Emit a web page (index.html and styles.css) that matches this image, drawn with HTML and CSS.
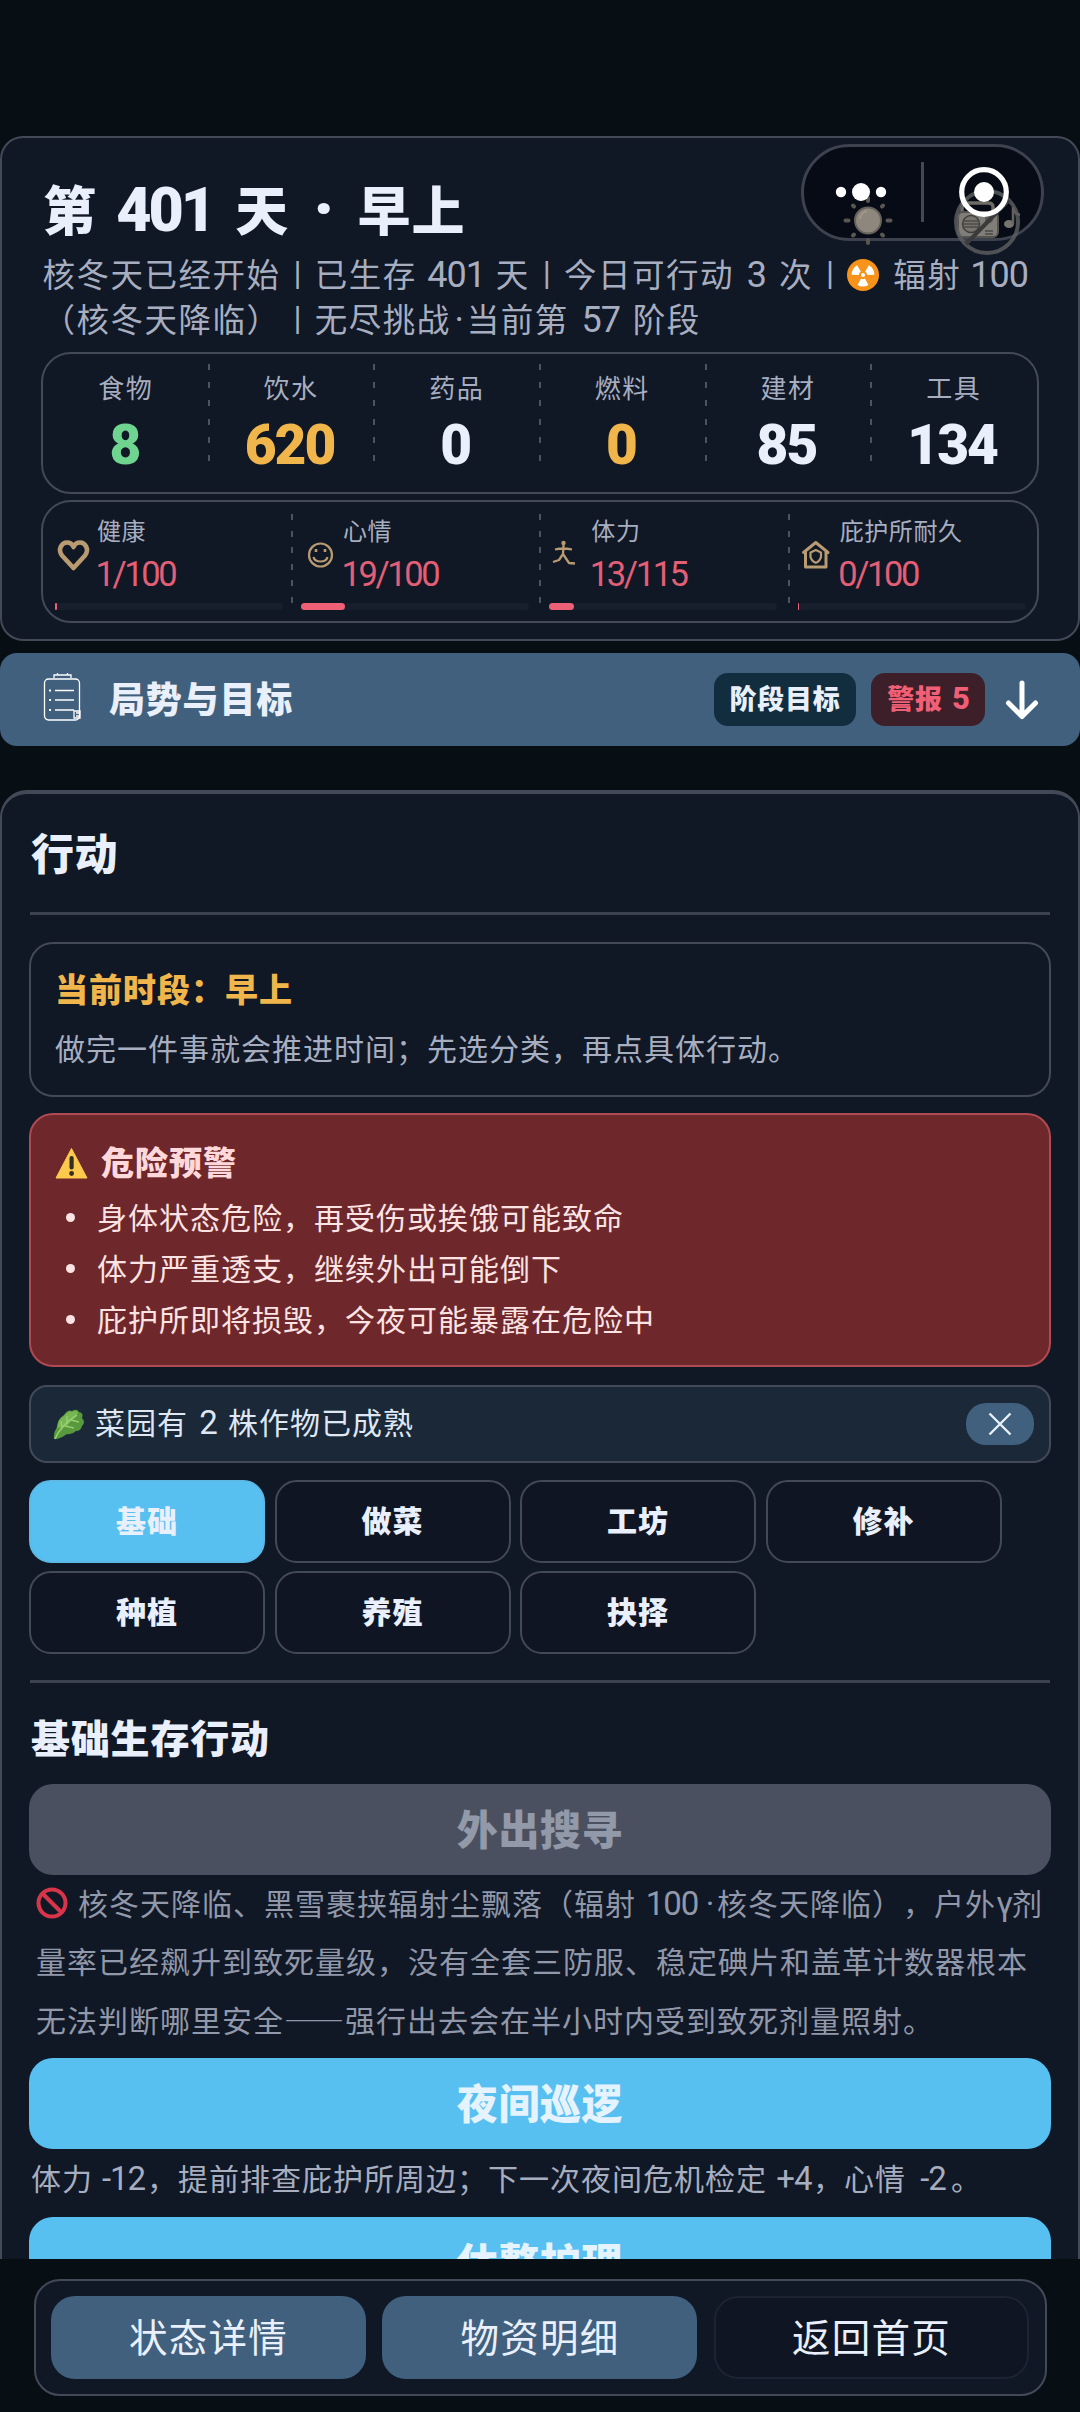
FILE: index.html
```html
<!DOCTYPE html>
<html lang="zh-CN">
<head>
<meta charset="utf-8">
<title>行动</title>
<link rel="stylesheet" href="styles.css">
</head>
<body>
<div class="screen">
  <header class="hero">
    <h1 class="day">第<span class="n day-num">401</span>天<span class="n day-dot">·</span>早上</h1>
    <p class="summary">核冬天已经开始<span class="bar">|</span>已生存<span class="n n3">401</span>天<span class="bar">|</span>今日可行动<span class="n n1">3</span>次<span class="bar">|</span><svg class="emo rad" viewBox="0 0 32 32"><circle cx="16" cy="16" r="16" fill="#f7931a"/><g fill="#fff"><circle cx="16" cy="16" r="2"/><path id="blade" d="M14 19.6 L10.6 26 Q16 29 21.4 26 L18 19.6 Q16 20.8 14 19.6Z"/><use href="#blade" transform="rotate(120 16 16)"/><use href="#blade" transform="rotate(240 16 16)"/></g></svg>辐射<span class="n n100">100</span><br>（核冬天降临）<span class="bar">|</span>无尽挑战<span class="n mid">·</span>当前第<span class="n n2">57</span>阶段</p>

    <div class="resources">
      <div class="res"><span class="label">食物</span><b class="good">8</b></div>
      <div class="res"><span class="label">饮水</span><b class="warn">620</b></div>
      <div class="res"><span class="label">药品</span><b>0</b></div>
      <div class="res"><span class="label">燃料</span><b class="warn">0</b></div>
      <div class="res"><span class="label">建材</span><b>85</b></div>
      <div class="res"><span class="label">工具</span><b>134</b></div>
    </div>

    <div class="vitals">
      <div class="vital">
        <svg class="vi" viewBox="0 0 36 36"><path d="M18.500 31 L7 18.500 C2.500 12.500 6.500 5.500 12 5.500 C15.500 5.500 17.500 7.500 18.500 10 C19.500 7.500 21.500 5.500 25 5.500 C30.500 5.500 34.500 12.500 30 18.500 Z" stroke-width="4.600"/></svg>
        <span class="label">健康</span><span class="val">1/100</span>
        <div class="track"><i style="width:2px"></i></div>
      </div>
      <div class="vital">
        <svg class="vi" viewBox="0 0 36 36"><circle cx="19.500" cy="18" r="11.500"/><path d="M12.500 20 Q13.500 24.500 19.500 24.500 Q25.500 24.500 26.500 20"/><path d="M15 12v3M24 12v3" stroke-width="2.600"/></svg>
        <span class="label">心情</span><span class="val">19/100</span>
        <div class="track"><i style="width:44px"></i></div>
      </div>
      <div class="vital">
        <svg class="vi" viewBox="0 0 36 36"><circle cx="14.500" cy="6" r="2.200" fill="#b99b72" stroke="none"/><path d="M6 12.500 Q14 10.500 23 12.500 M14.500 8 L14 17 L10 23 L4 25 M14 17 L20 26 L26 26.500" stroke-width="2.300"/></svg>
        <span class="label">体力</span><span class="val">13/115</span>
        <div class="track"><i style="width:25px"></i></div>
      </div>
      <div class="vital">
        <svg class="vi" viewBox="0 0 36 36"><path d="M7.500 30 V15 L5.500 15.500 L17.800 5.500 L30 15.500 L28 15 V30 Z" stroke-width="3"/><path d="M17.800 13 L23 15.500 V20 Q22 24 17.800 25.800 Q13.500 24 12.500 20 V15.500 Z"/></svg>
        <span class="label">庇护所耐久</span><span class="val">0/100</span>
        <div class="track"><i style="width:1px"></i></div>
      </div>
    </div>

    <svg class="capsule" viewBox="0 0 246 126">
      <rect x="1.500" y="1.500" width="240" height="94" rx="47" fill="#070b15" stroke="#3d424e" stroke-width="3"/>
      <rect x="120" y="18" width="3" height="60" fill="#444955"/>
      <g stroke="#5a5652" stroke-width="4" stroke-linecap="round">
        <path d="M67 57v-3M67 96v3M47.500 76.500h-3M86.500 76.500h3M53 62.500l-1-1M81 62.500l1-1M53 90.500l-1 1M81 90.500l1 1"/>
      </g>
      <circle cx="67" cy="76.500" r="13" fill="#8e877d" stroke="#67625c" stroke-width="2"/>
      <path d="M59 75q1-7 7-8" fill="none" stroke="#a39c91" stroke-width="1.500"/>
      <g>
        <path d="M161 70v-7q0-4 5-4h21q5 0 5 4v7" fill="none" stroke="#6f6c68" stroke-width="3.500"/>
        <rect x="157" y="68" width="40" height="25" rx="5" fill="#817e79" stroke="#55534f" stroke-width="2"/>
        <circle cx="170" cy="80" r="8.500" fill="#77746f" stroke="#403f3d" stroke-width="1.500"/>
        <path d="M163 77h14M162 80h16M163 83h14M184 87h8M184 90h8" stroke="#4b4946" stroke-width="1.300"/>
        <circle cx="188" cy="75" r="4" fill="#5c5a56"/>
        <ellipse cx="208" cy="80" rx="5" ry="4" fill="#77736e"/>
        <path d="M212 80V63q0 6 7 8" fill="none" stroke="#66635f" stroke-width="2.500"/>
      </g>
      <circle cx="186" cy="78" r="31" fill="none" stroke="#5e5e60" stroke-opacity=".82" stroke-width="4"/>
      <path d="M165 100L208 56" stroke="#3c3b3c" stroke-width="4"/>
      <g fill="#fff"><circle cx="40" cy="48" r="5.200"/><circle cx="60" cy="48" r="9"/><circle cx="80" cy="48" r="5.200"/><circle cx="183" cy="48" r="10"/></g>
      <circle cx="183" cy="48" r="22.300" fill="none" stroke="#fff" stroke-width="5.200"/>
    </svg>
  </header>

  <section class="goals">
    <svg class="clip" viewBox="0 0 40 50"><g fill="none" stroke="#fff" stroke-width="1.300"><rect x="1.500" y="7" width="35" height="41" rx="4"/><path d="M11 6V3h17v3M14.500 3V1M24.500 3V1M12 18.500h19M12 28h19M12 38h19"/><path d="M31 39h6v7h-6zM33 41h3M33 44h4"/></g><path d="M6 17.500h2v2h-2zM6 27h2v2h-2zM6 37h2v2h-2z" fill="#fff"/></svg>
    <h2>局势与目标</h2>
    <span class="tag stage">阶段目标</span>
    <span class="tag alert">警报<span class="n tagnum">5</span></span>
    <svg class="arrow" viewBox="0 0 34 40"><path d="M17 3V35M3.500 23L17 36.500L30.500 23" fill="none" stroke="#fff" stroke-width="5" stroke-linecap="round" stroke-linejoin="round"/></svg>
  </section>

  <main class="actions">
    <h2 class="title">行动</h2>
    <hr>
    <section class="box period">
      <h3>当前时段：早上</h3>
      <p>做完一件事就会推进时间；先选分类，再点具体行动。</p>
    </section>
    <section class="box danger">
      <h3><svg class="emo tri" viewBox="0 0 32 32"><path d="M16 1.500L31.500 31H.5Z" fill="#fdc94d" stroke="#fdc94d" stroke-linejoin="round"/><rect x="14" y="9" width="4.200" height="13.500" rx="2" fill="#332e24"/><circle cx="16.100" cy="26.500" r="2.400" fill="#332e24"/></svg>危险预警</h3>
      <ul>
        <li>身体状态危险，再受伤或挨饿可能致命</li>
        <li>体力严重透支，继续外出可能倒下</li>
        <li>庇护所即将损毁，今夜可能暴露在危险中</li>
      </ul>
    </section>
    <section class="box notice">
      <svg class="leaf" viewBox="0 0 32 32"><path d="M1 31Q0 25 4 19Q5 10 11 7Q15 1 19 3Q24 0 26 4Q31 5 29 10Q33 14 29 18Q28 23 23 23Q19 27 14 26Q9 30 4 31Z" fill="#57993c"/><path d="M4 20Q5 11 11 8Q15 2 19 4Q24 1 25 5L13 19Z" fill="#76b752"/><path d="M2 31Q7 18 24 7M9 21L8 13M14 16V8M12 18l9 2M18 12l8 2" fill="none" stroke="#98cc72" stroke-width="1.500"/></svg>
      <span>菜园有<span class="n n1s">2</span>株作物已成熟</span>
      <button class="close"><svg viewBox="0 0 24 24"><path d="M1.500 1.500L22.500 22.500M22.500 1.500L1.500 22.500" stroke="#eaf2fb" stroke-width="2.300"/></svg></button>
    </section>
    <nav class="tabs">
      <button class="on">基础</button><button>做菜</button><button>工坊</button><button>修补</button>
      <button>种植</button><button>养殖</button><button>抉择</button>
    </nav>
    <hr class="second">
    <h3 class="group">基础生存行动</h3>
    <button class="act off">外出搜寻</button>
    <p class="reason"><svg class="emo ban" viewBox="0 0 32 32"><g fill="none" stroke="#d8354a" stroke-width="4"><circle cx="16" cy="16" r="13.500"/><path d="M6.500 6.500l19 19"/></g></svg>核冬天降临、黑雪裹挟辐射尘飘落（辐射<span class="n n100s">100</span><span class="n mids">·</span>核冬天降临），户外<span class="n gam">γ</span>剂<br>量率已经飙升到致死量级，没有全套三防服、稳定碘片和盖革计数器根本<br>无法判断哪里安全——强行出去会在半小时内受到致死剂量照射。</p>
    <button class="act">夜间巡逻</button>
    <p class="effect">体力<span class="n e1">-12</span>，提前排查庇护所周边；下一次夜间危机检定<span class="n e2">+4</span>，心情<span class="n e3">-2</span>。</p>
    <button class="act">休整护理</button>
  </main>

  <footer class="dock">
    <div class="dock-box">
      <button>状态详情</button><button>物资明细</button><button class="home">返回首页</button>
    </div>
  </footer>
</div>
</body>
</html>
```
FILE: styles.css
```css
* { box-sizing: border-box; margin: 0; padding: 0; }
body {
  width: 1080px; height: 2412px; overflow: hidden;
  background: #070f15; color: #e9f0fb;
  font-family: "Noto Sans CJK SC", sans-serif; font-size: 30px;
  text-spacing-trim: space-all;
}
button { border: 0; font: inherit; color: inherit; }
svg { display: block; flex: none; }
h2, h3 { font-weight: 900; }

.screen { display: flex; flex-direction: column; height: 2412px; padding-top: 136px; }
.n { display: inline-block; font-family: Roboto, sans-serif; line-height: 1; text-align: center; letter-spacing: -1px; white-space: nowrap; }
.emo { display: inline-block; }

/* status header */
.hero {
  position: relative; flex: none; height: 505px; padding: 35px 39px 0;
  border: 2px solid #434957; border-radius: 23px; background: #101725;
}
.day { margin-left: 2px; font-size: 53px; font-weight: 900; line-height: 70px; letter-spacing: 1.2px; white-space: nowrap; }
.day-num { width: 138px; padding-right: 3px; font-size: 61px; letter-spacing: -3px; }
.day-dot { width: 68px; font-size: 66px; }
.summary { margin: 7px 0 12px 1.500px; font-size: 32.500px; line-height: 45px; letter-spacing: 1.500px; color: #a7aec0; white-space: nowrap; }
.summary .n { font-size: 36px; }
.bar { display: inline-block; width: 34.200px; text-align: center; font-family: Roboto, sans-serif; font-size: 33px; line-height: 1; letter-spacing: 0; vertical-align: 2px; }
.n3 { width: 79px; }
.n1 { width: 45px; }
.n2 { width: 64px; }
.summary .n100 { width: 76px; }
.mid { width: 16px; }
.rad { width: 32px; height: 32px; vertical-align: -4px; margin-right: 14px; }

.resources, .vitals { display: grid; border: 2px solid #434957; border-radius: 30px; }
.resources { grid-template-columns: repeat(6, 1fr); height: 142px; margin-bottom: 6px; }
.res { display: flex; flex-direction: column; align-items: center; padding-top: 15px; }
.res + .res, .vital + .vital { background: repeating-linear-gradient(#4c5261 0 6px, transparent 6px 18.200px) 0 10px / 2px 97px no-repeat; margin-left: -1px; }
.res .label { font-size: 26px; line-height: 36px; letter-spacing: 1.500px; color: #a7aec0; }
.res b { margin: 10px 3px 0 0; font: 900 55px/60px Roboto, sans-serif; letter-spacing: -2px; }
.good { color: #6fd490; }
.warn { color: #f0b64b; }

.vitals { grid-template-columns: repeat(4, 1fr); height: 123px; }
.vital { display: grid; grid-template: 37px 44px 8px / 42px 1fr; align-content: start; padding: 10px 9px 0 12px; column-gap: 0; }
.vital + .vital { background-size: 2px 89px; background-position: 0 12px; background-image: repeating-linear-gradient(#4c5261 0 6px, transparent 6px 16.600px); padding-left: 10px; }
.vi { grid-row: 1 / 3; width: 36px; height: 36px; margin-top: 25px; fill: none; stroke: #b99b72; stroke-width: 2.200; stroke-linejoin: round; }
.vital .label { font-size: 24px; line-height: 36px; letter-spacing: .6px; color: #a7aec0; white-space: nowrap; }
.val { padding-top: 2.500px; margin-left: -1.500px; font: 400 34.500px/44px Roboto, sans-serif; letter-spacing: -2.400px; color: #e25f76; }
.track { grid-column: 1 / 3; width: 228px; height: 7px; margin-top: 10px; border-radius: 4px; background: #171e2c; }
.track i { display: block; height: 7px; border-radius: 4px; background: #ee6075; }

.capsule { position: absolute; left: 799px; top: 5.500px; width: 246px; height: 126px; }

/* goals strip */
.goals { display: flex; flex: none; align-items: center; height: 93px; margin-top: 12px; padding: 0 41px 0 43px; border-radius: 17px; background: #41607e; }
.clip { width: 40px; height: 50px; margin-top: -5px; }
.goals h2 { margin: -5px auto 0 26px; font-size: 36px; line-height: 50px; letter-spacing: .8px; }
.tag { height: 53px; border-radius: 14px; font-size: 27px; font-weight: 800; line-height: 50px; letter-spacing: .8px; text-align: center; white-space: nowrap; }
.stage { width: 142px; margin-right: 15px; background: #112d3e; }
.alert { width: 114px; margin-right: 20px; background: #3c1f29; color: #f05f76; }
.tagnum { width: 26px; font-size: 31px; text-align: right; }
.arrow { width: 34px; height: 40px; }

/* action panel */
.actions {
  flex: 1; min-height: 0; overflow: hidden; margin-top: 44px; padding: 0 27px;
  border: 2px solid #434957; border-top-width: 4px; border-bottom: 0; border-radius: 27px 27px 0 0; background: #101725;
}
.title { margin: 26px 0 0 2px; font-size: 43px; line-height: 62px; letter-spacing: .5px; }
hr { height: 3px; margin: 30px 1px 0; border: 0; background: #3c4250; }
.box { border: 2px solid #434957; border-radius: 24px; }
.period { height: 155px; margin-top: 27px; padding: 19px 24px; }
.box h3 { font-size: 33px; line-height: 50px; letter-spacing: 1px; }
.period h3 { color: #f0b64b; }
.period p { margin-top: 10px; line-height: 48px; letter-spacing: 1px; color: #a7aec0; white-space: nowrap; }
.danger { height: 254px; margin-top: 16px; padding: 21px 25px; background: #6e272a; border-color: #b04a52; }
.danger h3 { color: #fed8da; }
.tri { width: 33px; height: 32px; vertical-align: -4px; margin: 0 13px 0 -1px; }
.danger ul { list-style: none; margin-top: 4.500px; color: #fbe3e4; }
.danger li { display: flex; align-items: center; line-height: 51px; letter-spacing: 1px; white-space: nowrap; }
.danger li::before { content: ""; width: 9px; height: 9px; margin: 3px 22px 0 10px; border-radius: 50%; background: #fbe3e4; }
.notice { display: flex; align-items: center; height: 78px; margin-top: 18px; padding: 0 15px 0 22px; background: #1a2838; border-radius: 18px; }
.notice > span { margin: -6px auto 0 10px; letter-spacing: 1px; color: #dfe7f3; white-space: nowrap; }
.leaf { width: 32px; height: 32px; }
.n1s { width: 40px; font-size: 33px; }
.close { display: grid; place-items: center; width: 68px; height: 42px; border-radius: 20px; background: #41607e; }
.close svg { width: 24px; height: 24px; }
.tabs { display: grid; grid-template-columns: repeat(4, 236px); column-gap: 9.500px; row-gap: 8px; margin-top: 17px; }
.tabs button { height: 83px; padding-bottom: 5px; border: 2px solid #434957; border-radius: 22px; background: #101524; font-size: 30px; font-weight: 900; letter-spacing: 1px; }
.tabs .on { background: #58bff1; border-color: #5cb9e6; }
hr.second { margin-top: 26px; }
.group { margin: 23px 0 18px 2px; font-size: 39px; line-height: 60px; letter-spacing: .8px; }
.act { display: block; width: 1022px; height: 91px; padding-bottom: 5px; border-radius: 24px; background: #58bff1; color: #e4f3fd; font-size: 41px; font-weight: 900; letter-spacing: .6px; }
.off { background: #4a505f; color: #9299a9; }
.reason { margin-top: -2px; padding: 0 0 10px 7px; font-size: 30px; line-height: 58.300px; letter-spacing: 1px; color: #9198a9; white-space: nowrap; }
.reason .n, .effect .n { font-size: 33px; }
.ban { width: 32px; height: 32px; vertical-align: -4px; margin-right: 10px; }
.n100s { width: 66px; padding-left: 6px; }
.mids { width: 15px; }
.gam { width: 16px; }
.effect { padding: 0 0 12px 2px; line-height: 56px; letter-spacing: 1px; color: #a7aec0; white-space: nowrap; }
.e1 { width: 54px; padding-left: 7px; }
.e2 { width: 46px; padding-left: 8px; }
.e3 { width: 45px; padding-left: 9px; }

/* bottom dock */
.dock { flex: none; height: 153px; padding: 20px 33.500px 0; background: #070f15; }
.dock-box { display: grid; grid-template-columns: repeat(3, 315px); gap: 16.500px; height: 117px; padding: 15px; border: 2px solid #434957; border-radius: 26px; background: #101725; }
.dock button { height: 83px; padding: 0 0 6px 1px; border-radius: 24px; background: #41607e; font-size: 38.500px; letter-spacing: 1.200px; }
.dock .home { border: 2px solid #1c2332; background: #101524; }
```
